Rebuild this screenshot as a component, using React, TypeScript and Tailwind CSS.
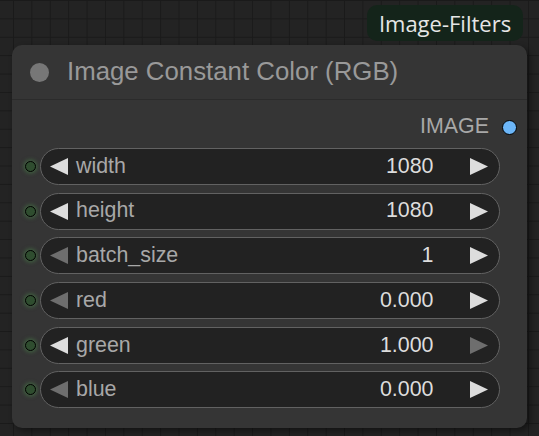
import React from "react";

type Widget = { name: string; value: string; leftOn: boolean; rightOn: boolean };

const widgets: Widget[] = [
  { name: "width", value: "1080", leftOn: true, rightOn: true },
  { name: "height", value: "1080", leftOn: true, rightOn: true },
  { name: "batch_size", value: "1", leftOn: false, rightOn: true },
  { name: "red", value: "0.000", leftOn: false, rightOn: true },
  { name: "green", value: "1.000", leftOn: true, rightOn: false },
  { name: "blue", value: "0.000", leftOn: false, rightOn: true },
];

function Arrow({ dir, on }: { dir: "left" | "right"; on: boolean }) {
  const pts = dir === "left" ? "18,0 18,17 0,8.5" : "0,0 0,17 18,8.5";
  return (
    <svg width="18" height="17" viewBox="0 0 18 17" className="shrink-0">
      <polygon points={pts} fill={on ? "#dddddd" : "#6e6e6e"} />
    </svg>
  );
}

function WidgetRow({ w }: { w: Widget }) {
  return (
    <div className="flex items-center pl-[12.5px]">
      <div className="h-[11px] w-[11px] shrink-0 rounded-full border-[1.5px] border-black bg-[#2f4d2f] shadow-[0_0_4px_1px_rgba(80,160,80,0.5)]" />
      <div className="ml-[4px] flex h-[37px] w-[460px] items-center rounded-full border-[1.5px] border-[#626262] bg-[#222222] pl-[9.5px] pr-[11px]">
        <Arrow dir="left" on={w.leftOn} />
        <span className="ml-[8px] text-[#a8a8a8]">{w.name}</span>
        <span className="ml-auto mr-[36px] text-[#dddddd]">{w.value}</span>
        <Arrow dir="right" on={w.rightOn} />
      </div>
    </div>
  );
}

export default function App() {
  return (
    <div
      className="relative h-[436px] w-[539px] overflow-hidden bg-[#232323] bg-[linear-gradient(to_right,#1a1a1a_1px,transparent_1px),linear-gradient(to_bottom,#1a1a1a_1px,transparent_1px)] bg-[size:18.4px_18.4px] bg-[position:13px_0px] pl-[12px] pt-[45px] text-[21.4px] leading-none"
      style={{ fontFamily: '"Liberation Sans", Arial, sans-serif' }}
    >
      <div className="absolute left-[367px] top-[5px] flex h-[36px] w-[156px] items-center justify-center rounded-[10px] bg-[#14241a] text-[22px] text-[#e6e6e6]" style={{ fontFamily: '"Open Sans", "Noto Sans", sans-serif' }}>
        Image-Filters
      </div>

      <div className="flex h-[383px] w-[515px] flex-col rounded-[10px] bg-[#353535] shadow-[3px_3px_6px_rgba(0,0,0,0.45)]">
        <div className="flex h-[55px] shrink-0 items-center border-b border-[#2b2b2b] pl-[18px]">
          <div className="h-[19px] w-[19px] rounded-full bg-[#777777]" />
          <span className="ml-[18px] text-[25.8px] text-[#999999]">Image Constant Color (RGB)</span>
        </div>

        <div className="mt-[15px] flex h-[24px] items-center justify-end pr-[10px]">
          <span className="text-[#a8a8a8]">IMAGE</span>
          <div className="ml-[13px] h-[15px] w-[15px] rounded-full border-[1.5px] border-black bg-[#6cb6f8]" />
        </div>

        <div className="mt-[9px] flex flex-col gap-[7.7px]">
          {widgets.map((w) => (
            <WidgetRow key={w.name} w={w} />
          ))}
        </div>
      </div>
    </div>
  );
}
